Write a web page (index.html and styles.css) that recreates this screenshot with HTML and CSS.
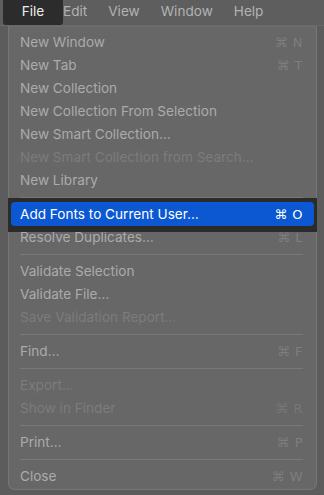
FILE: index.html
```html
<!DOCTYPE html>
<html lang="en">
<head>
<meta charset="utf-8">
<title>File menu</title>
<link rel="stylesheet" href="styles.css">
</head>
<body>
<div class="menubar">
  <span class="mb-item mb-file">File</span>
  <span class="mb-item mb-edit">Edit</span>
  <span class="mb-item">View</span>
  <span class="mb-item">Window</span>
  <span class="mb-item">Help</span>
</div>
<div class="menu">
  <div class="item"><span>New Window</span><span class="key">⌘ N</span></div>
  <div class="item"><span>New Tab</span><span class="key">⌘ T</span></div>
  <div class="item"><span>New Collection</span></div>
  <div class="item"><span>New Collection From Selection</span></div>
  <div class="item"><span>New Smart Collection…</span></div>
  <div class="item off"><span>New Smart Collection from Search…</span></div>
  <div class="item"><span>New Library</span></div>
  <div class="sep"></div>
  <div class="item active"><span>Add Fonts to Current User…</span><span class="key">⌘ O</span></div>
  <div class="item"><span>Resolve Duplicates…</span><span class="key">⌘ L</span></div>
  <div class="sep"></div>
  <div class="item"><span>Validate Selection</span></div>
  <div class="item"><span>Validate File…</span></div>
  <div class="item off"><span>Save Validation Report…</span></div>
  <div class="sep"></div>
  <div class="item"><span>Find…</span><span class="key">⌘ F</span></div>
  <div class="sep"></div>
  <div class="item off"><span>Export…</span></div>
  <div class="item off"><span>Show in Finder</span><span class="key">⌘ R</span></div>
  <div class="sep"></div>
  <div class="item"><span>Print…</span><span class="key">⌘ P</span></div>
  <div class="sep"></div>
  <div class="item"><span>Close</span><span class="key">⌘ W</span></div>
</div>
</body>
</html>
```

FILE: styles.css
```css
html, body {
  margin: 0;
  padding: 0;
}
body {
  width: 324px;
  height: 495px;
  overflow: hidden;
  background: #5c5c5c;
  font-family: Inter, "Liberation Sans", "DejaVu Sans", sans-serif;
  font-size: 13.6px;
  color: #ababab;
}
.menubar {
  height: 25px;
  border-bottom: 1px solid #686868;
  background: #5e5e5e;
  display: flex;
  align-items: flex-start;
  padding-left: 3px;
}
.mb-item {
  line-height: 22px;
  padding: 0 10.5px;
  color: #b2b2b2;
}
.mb-file {
  height: 25px;
  width: 60px;
  box-sizing: border-box;
  padding: 0;
  text-align: center;
  background: #2c2c2c;
  color: #ececec;
  border-radius: 0 0 3px 3px;
}
.mb-edit {
  padding-left: 0;
}
.menu {
  margin-left: 8px;
  width: 309px;
  box-sizing: border-box;
  border: 1px solid #767676;
  border-top-color: #6e6e6e;
  border-radius: 0 0 7px 7px;
  background: #676767;
  padding: 4px 0 1px;
}
.item {
  height: 23px;
  line-height: 23px;
  margin: 0 2px;
  padding: 0 11px 0 9px;
  display: flex;
  justify-content: space-between;
  white-space: nowrap;
}
.item.off {
  color: #7c7c7c;
}
.key {
  color: #7e7e7e;
  font-family: "DejaVu Sans", Inter, sans-serif;
  font-size: 13px;
  letter-spacing: 0.5px;
}
.item.off .key {
  color: #777777;
}
.item.active {
  position: relative;
  z-index: 1;
  color: #ffffff;
}
.item.active .key {
  color: #ffffff;
}
.item.active::before {
  content: "";
  position: absolute;
  top: -5px;
  bottom: -6px;
  left: -3px;
  right: -3px;
  background: #2b2b2b;
  z-index: -2;
}
.item.active::after {
  content: "";
  position: absolute;
  top: -1px;
  bottom: 0;
  left: 0;
  right: 0;
  background: #0b58d2;
  border-radius: 4px;
  z-index: -1;
}
.sep {
  height: 11px;
  margin: 0 13px 0 11px;
  display: flex;
  align-items: center;
}
.sep::before {
  content: "";
  flex: 1;
  height: 1px;
  background: #787878;
}
```
